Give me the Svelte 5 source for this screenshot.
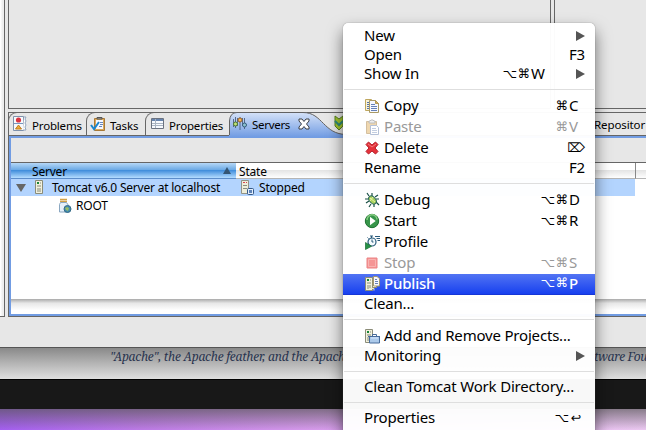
<script>
  const menu = [
    { label: 'New', arrow: true },
    { label: 'Open', key: 'F3' },
    { label: 'Show In', mods: '⌥⌘', key: 'W', arrow: true },
    null,
    { label: 'Copy', icon: 'copy', mods: '⌘', key: 'C' },
    { label: 'Paste', icon: 'paste', mods: '⌘', key: 'V', disabled: true },
    { label: 'Delete', icon: 'delete', sym: '⌦' },
    { label: 'Rename', key: 'F2' },
    null,
    { label: 'Debug', icon: 'debug', mods: '⌥⌘', key: 'D' },
    { label: 'Start', icon: 'start', mods: '⌥⌘', key: 'R' },
    { label: 'Profile', icon: 'profile' },
    { label: 'Stop', icon: 'stop', mods: '⌥⌘', key: 'S', disabled: true },
    { label: 'Publish', icon: 'publish', mods: '⌥⌘', key: 'P', active: true },
    { label: 'Clean...' },
    null,
    { label: 'Add and Remove Projects...', icon: 'projects' },
    { label: 'Monitoring', arrow: true },
    null,
    { label: 'Clean Tomcat Work Directory...' },
    null,
    { label: 'Properties', mods: '⌥', sym: '↩' }
  ];
  const tabs = [
    { label: 'Problems', icon: 'problems', cls: 'problems' },
    { label: 'Tasks', icon: 'tasks', cls: 'tasks' },
    { label: 'Properties', icon: 'table', cls: 'props' }
  ];
</script>

{#snippet serverTower()}
  <path d="M1.5 1.5h7v13h-7z" fill="#f1f0dc" stroke="#8b8c78" />
  <path d="M3 3h2v2H3z" fill="#178536" /><path d="M6 4h1M3 7h4M3 10h4M3 12h4" stroke="#858978" />
{/snippet}

{#snippet icon(name)}
  <svg class="icon" width="16" height="16" viewBox="0 0 16 16" fill="none">
    {#if name === 'copy'}
      <path d="M1.5 1.5h6l2 2v9h-8z" fill="#fbf3d4" stroke="#bfa75f" />
      <path d="M3 4.5h2M3 6.5h2M3 8.5h2M3 10.500h2" stroke="#5574ad" />
      <path d="M5.500 2.500h6l3 3v9h-9z" fill="#f7f9ff" stroke="#a99a66" />
      <path d="M11.500 2.500v3h3z" fill="#d8b65d" stroke="#b39752" />
      <path d="M7 6.500h4M7 8.500h6M7 10.500h6M7 12.500h6" stroke="#6681b8" />
    {:else if name === 'paste'}
      <g opacity=".48"><path d="M2.500 2.500h10v12h-10z" fill="#dfad59" stroke="#a77b38" />
      <path d="M5 4V2h1l1-1h2l1 1h1v2z" fill="#ddd" stroke="#777" />
      <path d="M6.500 6.500h6l2 2v7h-8z" fill="#fff" stroke="#647faf" />
      <path d="M8 9.500h4M8 11.500h5M8 13.500h5" stroke="#8198c2" /></g>
    {:else if name === 'delete'}
      <path d="M2 4.500 4.500 2 8 5l3.500-3L14 4.500 11 8l3 3.500-2.500 2.500L8 11l-3.500 3L2 11.500 5 8z" fill="#e5323a" stroke="#b41f2b" />
      <path d="m4 4 4 3 4-3" stroke="#f27c7d" />
    {:else if name === 'debug'}
      <path d="m5 4-2-3M8 4V1M11 5l3-2M4 7H1M5 9l-3 2M7 12l-2 3M10 12v3M12 10l3 3M12 7h3" stroke="#194f45" stroke-width="1.2" />
      <ellipse cx="8.500" cy="8" rx="3" ry="4.600" transform="rotate(-42 8.500 8)" fill="#a7d15b" stroke="#28655b" />
      <path d="m6 6 5 4M9 5l-3 4" stroke="#e6f3a1" />
    {:else if name === 'start'}
      <circle cx="8" cy="8" r="6.700" fill="#37954a" stroke="#1c7130" />
      <path d="M3 7a5 5 0 0 1 10-.5" stroke="#85ca80" stroke-width="1.500" />
      <path d="m6 3.700 5.700 4.300L6 12.300z" fill="#fff" />
    {:else if name === 'profile'}
      <circle cx="8" cy="8" r="4" fill="#f4fbff" stroke="#285a7b" stroke-width="1.200" />
      <path d="M6 2h3M7.500 2v2M3.500 3.500l1 1M8 5.500V8h1.500M11 2.500h5M12.500 4.500H16M13.500 6.500H16" stroke="#285a7b" />
      <path d="m1.500 8.500 6 3.800-6 3.200z" fill="#279247" stroke="#156b32" stroke-width=".7" />
    {:else if name === 'stop'}
      <path d="M3 3h10v10H3z" fill="#f59595" stroke="#ec8384" /><path d="M4.500 4.500h7v7h-7z" stroke="#f8b3b1" />
    {:else if name === 'publish'}
      {@render serverTower()}
      <path d="M8.500 3.500h4v8h-4z" fill="#fff" stroke="#938e6d" /><path d="M9.500 .500h3.500l2.500 2v7.500h-6z" fill="#f6f7ff" stroke="#a3986e" />
      <path d="M11 3.500h2M11 5.500h3M11 7.500h3" stroke="#6681b8" /><path d="M5 12.500h5v2" stroke="#e9e7ca" />
    {:else if name === 'projects'}
      {@render serverTower()}
      <path d="M5.500 8.500h10v6.500h-10z" fill="#abc9ea" stroke="#476b9b" /><path d="M8.500 8V6.500h4V8M4 8.500h12" stroke="#476b9b" /><path d="M7 10h7" stroke="#dceaff" />
    {:else if name === 'problems'}
      <path d="M1.500.500h10v14h-10z" fill="#f8f9fb" stroke="#7e91ab" /><path d="M12 1h2l-1 2 1 2-1 2 1 2-1 2 1 3h-3" fill="#fff" stroke="#91a4bd" />
      <circle cx="6.500" cy="4" r="2.600" fill="#db3441" /><path d="M2 7.500h9" stroke="#7797bf" /><path d="m6.500 9 3 4h-6z" fill="#efad37" stroke="#bd7c23" />
    {:else if name === 'tasks'}
      <path d="M4.500 2.500h10v12h-10z" fill="#d9a85b" stroke="#a97936" /><path d="M6 4h7v9H6z" fill="#f5f8ff" /><path d="M7 3V1.500h5V3z" fill="#aaa" stroke="#555" />
      <path d="M10 6.500h3M10 8.500h3M9 10.500h3" stroke="#6785bb" /><path d="m1 9 3 4 5-7" stroke="#1785cf" stroke-width="2" />
    {:else if name === 'table'}
      <path d="M1.500 2.500h12v10h-12z" fill="#f7faff" stroke="#6b7280" /><path d="M2 3h11v2H2z" fill="#6684af" /><path d="M5.500 3v9M2 7.500h11M2 9.500h11" stroke="#a9b4c2" />
    {:else if name === 'sliders'}
      <path d="M3.500 1v11M8 1v13M12.500 2v11M1.500 3v8M5.500 2v8M10.500 2v8" stroke="#3f526e" stroke-width=".8" /><circle cx="3.500" cy="8" r="2" fill="#bfe177" stroke="#4f7635" /><circle cx="8" cy="4" r="2" fill="#f6ba58" stroke="#985e24" /><circle cx="12.500" cy="9" r="2" fill="#8dc3cf" stroke="#365b7c" />
    {:else if name === 'server'}
      <g transform="translate(3 -1)">{@render serverTower()}</g>
    {:else if name === 'stopped'}
      <path d="M1.500.500h7v13h-7z" fill="#eeeeda" stroke="#929386" /><path d="M3 2.500h2M6 2.500h1" stroke="#d94250" /><path d="M3 5.500h4M3 8.500h4" stroke="#8a8c80" />
      <rect x="7.500" y="8.500" width="6" height="6" rx="1" fill="#e3edfb" stroke="#345987" /><path d="M9 10h3v3H9z" fill="#5d83b8" />
    {:else if name === 'root'}
      <path d="M3 1.500h7M3 3.500h7" stroke="#d4a247" stroke-width="1.400" /><path d="M3.500 4.500h6l2 3v6.500h-9v-7.500z" fill="#e6f0fa" stroke="#8aa7c1" />
      <circle cx="10.500" cy="11" r="3.500" fill="#438bb0" stroke="#356b87" /><path d="m8 10 2-1 2 1-1 3-2-1z" fill="#99bd65" />
    {/if}
  </svg>
{/snippet}

<div class="screen">
  <div class="window">
    <div class="stub"></div>
    <div class="main">
      <div class="editors"><div class="editor first"></div><div class="editor"></div></div>
      <section class="folder">
        <div class="tabs">
          {#each tabs as tab}
            <div class="tab {tab.cls}">{@render icon(tab.icon)}<span>{tab.label}</span></div>
          {/each}
          <div class="current">
            <svg class="shape" width="118" height="25" viewBox="0 0 118 25">
              <defs><linearGradient id="blue" x2="0" y2="1"><stop stop-color="#d5e2f8" /><stop offset="1" stop-color="#719ce3" /></linearGradient></defs>
              <path d="M0 25V9Q1 .500 8 .500h66c20 0 20 22 44 22V25z" fill="url(#blue)" />
              <path d="M.500 23V9Q1 .500 8 .500h66c20 0 20 22 44 22" fill="none" stroke="#626262" />
            </svg>
            {@render icon('sliders')}<span>Servers</span>
            <svg class="close" width="12" height="12" viewBox="0 0 12 12"><path d="M1 1h3l2 2.500L8 1h3v2L8.500 6 11 9v2H8L6 8.500 4 11H1V9l2.500-3L1 3z" fill="#fff" stroke="#3d4045" /></svg>
          </div>
          <svg class="next" width="14" height="16" viewBox="0 0 14 16"><path d="m1 1 4 3 4-3v10l-4 4-4-4z" fill="#a4c52b" stroke="#558020" /><path d="m1 6 4 4 4-4" fill="none" stroke="#2d8a79" stroke-width="2" /></svg>
          <span class="repo">Repositor</span>
        </div>
        <div class="body">
          <div class="toolbar"></div>
          <div class="head">
            <div class="server"><span>Server</span><i></i></div>
            <div class="state">State</div><div class="rest"></div>
          </div>
          <div class="row selected"><i class="down"></i>{@render icon('server')}<span class="name">Tomcat v6.0 Server at localhost</span>{@render icon('stopped')}<span class="status">Stopped</span></div>
          <div class="row child">{@render icon('root')}<span>ROOT</span></div>
          <div class="space"></div>
          <div class="scroll"></div>
        </div>
      </section>
    </div>
  </div>
  <div class="page"><em>"Apache", the Apache feather, and the Apach</em><em class="end">tware Fou</em></div>
  <div class="black"></div>
  <div class="desktop"></div>

  <div class="menu">
    {#each menu as item}
      {#if item}
        <div class="item" class:tall={item.icon} class:disabled={item.disabled} class:active={item.active}>
          {#if item.icon}{@render icon(item.icon)}{/if}
          <span class="label">{item.label}</span>
          <span class="mods">{#each item.mods ?? '' as m}<b>{m}</b>{/each}</span>
          <span class="key" class:wide={item.arrow}>{#if item.sym}<b>{item.sym}</b>{:else}<span>{item.key ?? ''}</span>{/if}{#if item.arrow}<i></i>{/if}</span>
        </div>
      {:else}
        <div class="sep"></div>
      {/if}
    {/each}
  </div>
</div>

<style>
  :global(body) { margin: 0; }
  .screen { position: relative; width: 646px; height: 430px; overflow: hidden; font: 12px/16px "Noto Sans", "Open Sans", sans-serif; color: #000; }
  .screen * { box-sizing: border-box; }
  .icon { flex: none; display: block; }
  .window { height: 348px; display: flex; gap: 3px; background: #e7e7e7; border-bottom: 1px solid #555; }
  .stub { width: 5px; height: 317px; border: solid #666; border-width: 0 1px 1px 0; background: linear-gradient(90deg, #fff 1px, #eee 2px); flex: none; }
  .main { flex: 1; min-width: 0; }
  .editors { display: flex; gap: 3px; height: 109px; }
  .editor { flex: 1; border: 1px solid #666; border-width: 0 0 1px 1px; }
  .editor.first { flex: none; width: 543px; border-right-width: 1px; }
  .folder { margin-top: 3px; height: 205px; border: solid #666; border-width: 0 0 1px 1px; }
  .tabs { height: 24px; display: flex; background: linear-gradient(#666 1px, transparent 1px, transparent 23px, #666 23px); margin-left: -1px; white-space: nowrap; font-size: 11.5px; letter-spacing: -.17px; }
  .tab { display: flex; align-items: center; gap: 4px; border: solid #666; border-width: 1px 0 0 1px; border-radius: 9px 0 0 0; padding: 0 0 0 3px; height: 23px; flex: none; }
  .tab span { padding-top: 3px; }
  .problems { width: 78px; }
  .tasks { width: 59px; }
  .props { width: 84px; gap: 3px; padding-left: 4px; }
  .current { position: relative; width: 109px; display: flex; align-items: center; padding-left: 3px; flex: none; }
  .current > :global(.icon), .current > span, .close { position: relative; }
  .current > span { margin-left: 4px; padding-top: 2px; letter-spacing: -.3px; }
  .close { margin-left: 8px; }
  .shape { position: absolute; left: 0; top: 0; }
  .next { margin: 3px 0 0 -4px; flex: none; position: relative; }
  .repo { margin: 5px 0 0 246px; letter-spacing: -.1px; }
  .body { border: solid #719ce3; border-width: 2px 0 2px 2px; height: 180px; background: #fff; }
  .toolbar { height: 25px; background: #e7e7e7; border-bottom: 1px solid #666; }
  .head { display: flex; height: 16px; line-height: 17px; letter-spacing: -.2px; }
  .server { width: 225px; display: flex; justify-content: space-between; padding: 0 5px 0 21px; background: linear-gradient(#b6d8f7, #68a7e4 48%, #438fdc 50%, #b4dcff); border-bottom: 1px solid #5c8dca; }
  .server i { border: solid transparent; border-width: 0 4px 7px; border-bottom-color: #345574; align-self: center; height: 0; width: 0; }
  .state { width: 400px; padding-left: 3px; border-right: 1px solid #888; }
  .rest { flex: 1; }
  .state, .rest { background: linear-gradient(#fff 45%, #e5e5e5 50%, #fff); border-bottom: 1px solid #b5b5b5; }
  .row { display: flex; align-items: center; height: 18px; letter-spacing: -.21px; }
  .row span { padding-top: 1px; }
  .selected { width: 624px; height: 17px; background: #b3d4fe; padding-left: 5px; }
  .down { border: solid transparent; border-width: 8px 5px 0; border-top-color: #666; margin-right: 5px; flex: none; }
  .name { width: 187px; margin-left: 5px; white-space: nowrap; }
  .selected > :global(.icon:nth-of-type(2)) { margin-left: 1px; }
  .status { margin-left: 3px; }
  .child { padding-left: 46px; gap: 3px; height: 19px; }
  .space { height: 84px; }
  .scroll { height: 15px; background: linear-gradient(#aaa, #e7e7e7 28%, #fff 75%); }
  .page { height: 31px; display: flex; padding: 0 0 0 110px; background: linear-gradient(#898989, #b5b5b5 50%, #dedede); font: 12px/18px "Noto Serif", "Liberation Serif", serif; letter-spacing: -.24px; color: #29344f; white-space: nowrap; }
  .page em:first-child { width: 484px; flex: none; }
  .page .end { letter-spacing: -.35px; }
  .black { height: 30px; background: #181818; border-top: 1px solid #000; }
  .desktop { height: 21px; background: linear-gradient(#555a, #5550 100%), linear-gradient(90deg, #a45ff0, #bd7be6 22%, #d69aec 48%, #ecc9f2); }
  .menu { position: absolute; left: 343px; top: 23px; width: 252px; height: 415px; padding-top: 4px; background: #fffffff8; border-radius: 5px 5px 0 0; box-shadow: 0 0 1px #555, 0 8px 16px #0008; font-size: 15px; letter-spacing: -.19px; }
  .item { display: flex; align-items: center; height: 19px; padding-left: 21px; white-space: nowrap; line-height: 17px; }
  .item > span { padding-bottom: 2px; }
  .item.tall { height: 21px; gap: 4px; }
  .tall > :global(.icon) { margin-top: -1px; }
  .label { flex: 1; }
  .mods { display: flex; }
  b { font: 12.5px/16px "DejaVu Sans", sans-serif; letter-spacing: 0; width: 14px; display: flex; justify-content: center; }
  .key { width: 26px; display: flex; align-items: center; margin-left: 0; }
  .tall .key { margin-left: -4px; }
  .key.wide { width: 64px; }
  .key i { border: solid transparent; border-width: 5px 0 5px 9px; border-left-color: #555; margin: 0 10px 0 auto; }
  .disabled { color: #999; }
  .active { color: #fff; background: linear-gradient(#5274f3, #1740ef); border-bottom: 1px solid #1636d6; font-weight: 500; }
  .sep { height: 12px; padding-top: 5px; }
  .sep::before { content: ''; display: block; height: 1px; background: #dedede; margin: 0 1px; }
</style>
